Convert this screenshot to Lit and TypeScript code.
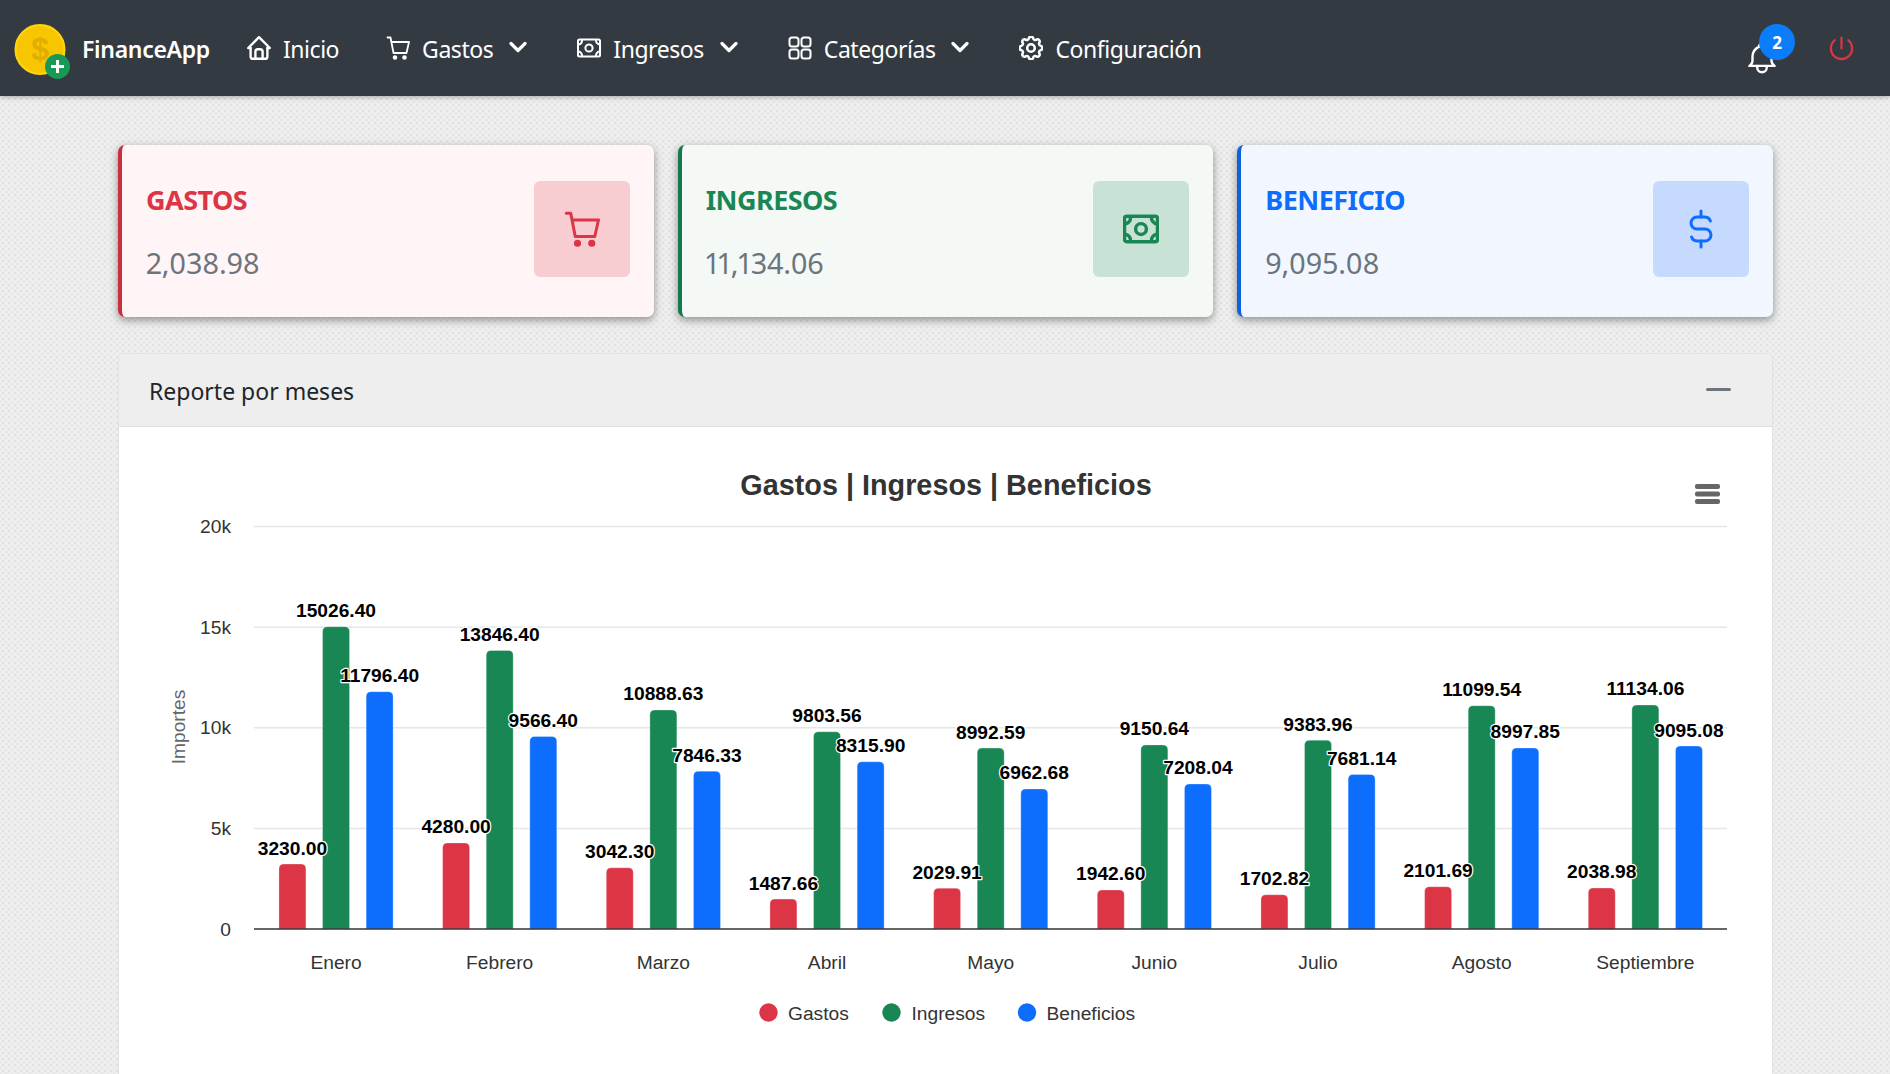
import { LitElement, css, html, svg } from "lit";
import { customElement } from "lit/decorators.js";

const RED = "#dc3545";
const GREEN = "#198754";
const BLUE = "#0d6efd";

const months = [
  { name: "Enero", g: 3230.0, i: 15026.4, b: 11796.4 },
  { name: "Febrero", g: 4280.0, i: 13846.4, b: 9566.4 },
  { name: "Marzo", g: 3042.3, i: 10888.63, b: 7846.33 },
  { name: "Abril", g: 1487.66, i: 9803.56, b: 8315.9 },
  { name: "Mayo", g: 2029.91, i: 8992.59, b: 6962.68 },
  { name: "Junio", g: 1942.6, i: 9150.64, b: 7208.04 },
  { name: "Julio", g: 1702.82, i: 9383.96, b: 7681.14 },
  { name: "Agosto", g: 2101.69, i: 11099.54, b: 8997.85 },
  { name: "Septiembre", g: 2038.98, i: 11134.06, b: 9095.08 },
];

const ic = (size: number, box: string, body: unknown, sw = 2) => html`<svg
  width=${size}
  height=${size}
  viewBox=${box}
  fill="none"
  stroke="currentColor"
  stroke-width=${sw}
  stroke-linecap="round"
  stroke-linejoin="round"
>
  ${body}
</svg>`;

const house = svg`<path d="M5 12H3l9-9 9 9h-2" /><path d="M5 12v7a2 2 0 0 0 2 2h10a2 2 0 0 0 2-2v-7" /><path d="M9 21v-6a2 2 0 0 1 2-2h2a2 2 0 0 1 2 2v6" />`;
const cart = svg`<path d="M1.5 1.5h3L7.5 17h13l2.5-11H5.5" /><circle cx="9" cy="21.5" r="1.4" fill="currentColor" /><circle cx="18.5" cy="21.5" r="1.4" fill="currentColor" />`;
const cash = svg`<rect x="1" y="3.5" width="22" height="17" rx="1.5" /><circle cx="12" cy="12" r="3.6" /><path d="M1.5 8.5a4 4 0 0 0 3.5-4M19 4a4 4 0 0 0 3.5 4.5M22.5 15.5A4 4 0 0 0 19 20M5 20a4 4 0 0 0-3.5-4.5" />`;
const grid = svg`<rect x="1.5" y="1.5" width="9" height="9" rx="2.5" /><rect x="13.5" y="1.5" width="9" height="9" rx="2.5" /><rect x="1.5" y="13.5" width="9" height="9" rx="2.5" /><rect x="13.5" y="13.5" width="9" height="9" rx="2.5" />`;
const gear = svg`<path d="M10.325 4.317c.426-1.756 2.924-1.756 3.35 0a1.724 1.724 0 0 0 2.573 1.066c1.543-.94 3.31.826 2.37 2.37a1.724 1.724 0 0 0 1.065 2.572c1.756.426 1.756 2.924 0 3.35a1.724 1.724 0 0 0-1.066 2.573c.94 1.543-.826 3.31-2.37 2.37a1.724 1.724 0 0 0-2.572 1.065c-.426 1.756-2.924 1.756-3.35 0a1.724 1.724 0 0 0-2.573-1.066c-1.543.94-3.31-.826-2.37-2.37a1.724 1.724 0 0 0-1.065-2.572c-1.756-.426-1.756-2.924 0-3.35a1.724 1.724 0 0 0 1.066-2.573c-.94-1.543.826-3.31 2.37-2.37 1 .608 2.296.07 2.572-1.065z" /><circle cx="12" cy="12" r="3" />`;
const bell = svg`<path d="M10 5a2 2 0 1 1 4 0 7 7 0 0 1 4 6v3a4 4 0 0 0 2 3H4a4 4 0 0 0 2-3v-3a7 7 0 0 1 4-6" /><path d="M9 17v1a3 3 0 0 0 6 0v-1" />`;
const power = svg`<path d="M7 6a7.75 7.75 0 1 0 10 0" /><path d="M12 4v8" />`;
const dollar = svg`<path d="M16.7 8a3 3 0 0 0-2.7-2h-4a3 3 0 0 0 0 6h4a3 3 0 0 1 0 6h-4a3 3 0 0 1-2.7-2" /><path d="M12 3v3m0 12v3" />`;
const chevron = html`<svg class="chev" width="18" height="12" viewBox="0 0 18 12" fill="none" stroke="currentColor" stroke-width="3.2" stroke-linecap="round" stroke-linejoin="round"><path d="M2 2.5l7 7 7-7" /></svg>`;

@customElement("app-root")
export class AppRoot extends LitElement {
  static styles = css`
    :host {
      display: block;
      height: 1074px;
      overflow: hidden;
      font-family: "Noto Sans", "Open Sans", sans-serif;
      background-color: #f0f0f0;
      background-image: radial-gradient(#e2e2e2 1px, transparent 2px),
        radial-gradient(#e6e6e6 1px, transparent 2px);
      background-size: 6px 6px;
      background-position: 0 0, 3px 3px;
    }
    * {
      box-sizing: border-box;
    }
    nav {
      height: 96px;
      background: #343a42;
      color: #fff;
      display: flex;
      align-items: center;
      padding: 0 32px 0 12px;
      box-shadow: 0 1px 5px rgba(0, 0, 0, 0.3);
    }
    .brand {
      display: flex;
      align-items: center;
      gap: 10px;
      font-size: 23px;
      font-weight: 600;
      letter-spacing: -0.3px;
      margin-right: 37px;
    }
    .brand svg {
      margin-top: 8px;
    }
    .brand span,
    .item span {
      margin-top: 2px;
    }
    .item {
      display: flex;
      align-items: center;
      gap: 12px;
      font-size: 23px;
      letter-spacing: -0.45px;
      margin-right: 50px;
      white-space: nowrap;
    }
    .item.home {
      margin-right: 47px;
    }
    .chev {
      margin-left: 4px;
      margin-top: -3px;
    }
    .right {
      margin-left: auto;
      display: flex;
      align-items: center;
      gap: 44px;
    }
    .bell {
      position: relative;
      display: flex;
      margin-top: 20px;
    }
    .count {
      position: absolute;
      left: 16px;
      top: -15px;
      width: 36px;
      height: 36px;
      border-radius: 50%;
      background: #0b7dfb;
      font-size: 17px;
      font-weight: 700;
      display: flex;
      align-items: center;
      justify-content: center;
    }
    .power {
      color: #dc3545;
      display: flex;
    }
    main {
      padding: 49px 117px 0 118px;
    }
    .cards {
      display: grid;
      grid-template-columns: repeat(3, 1fr);
      gap: 24px;
      margin-bottom: 36px;
    }
    .card {
      height: 172px;
      border-radius: 7px;
      border-left: 4px solid;
      padding: 0 24px;
      display: flex;
      align-items: center;
      justify-content: space-between;
      box-shadow: 0 3px 8px rgba(0, 0, 0, 0.4);
    }
    .card.red {
      background: #fff5f6;
      border-color: #c8303f;
      color: #dc3545;
    }
    .card.green {
      background: #f4f9f6;
      border-color: #157a4b;
      color: #198754;
    }
    .card.blue {
      background: #f2f7ff;
      border-color: #0d62e0;
      color: #0d6efd;
    }
    .copy {
      margin-top: 3px;
    }
    .card h3 {
      margin: 0 0 26px;
      font-size: 27px;
      font-weight: 700;
      line-height: 34px;
      letter-spacing: -0.55px;
    }
    .card p {
      margin: 0;
      font-size: 28.8px;
      line-height: 40px;
      color: #6c757d;
      letter-spacing: -0.2px;
      font-variant-numeric: proportional-nums;
    }
    .tile {
      width: 96px;
      height: 96px;
      margin-bottom: 4px;
      border-radius: 6px;
      display: flex;
      align-items: center;
      justify-content: center;
    }
    .red .tile {
      background: #f8cdd2;
    }
    .green .tile {
      background: #c9e2d6;
    }
    .blue .tile {
      background: #c6daff;
    }
    .panel {
      border: 1px solid #e2e2e2;
      border-bottom: 0;
      border-radius: 6px 6px 0 0;
      background: #fff;
      overflow: hidden;
    }
    .panel header {
      height: 73px;
      background: #eee;
      border-bottom: 1px solid #dedede;
      padding: 2px 41px 0 30px;
      display: flex;
      align-items: center;
      justify-content: space-between;
      font-size: 23px;
      color: #212529;
    }
    .minus {
      width: 25px;
      height: 3px;
      border-radius: 2px;
      background: #6c757d;
      margin-top: -4px;
    }
    .chart {
      display: block;
      width: 100%;
      height: 648px;
      font-family: "Liberation Sans", Arial, sans-serif;
    }
  `;

  private chart() {
    // page coordinates, the viewBox starts at the panel body corner
    const left = 254;
    const right = 1727;
    const base = 929;
    const step = (right - left) / 9;
    const y = (v: number) => base - (v * 100.6) / 5000;
    const bar = (cx: number, v: number, c: string) => {
      const t = y(v);
      return svg`<path d="M${cx - 13.5} ${base}V${t + 5}q0-5 5-5h17q5 0 5 5V${base}z" fill=${c} stroke="#fff" stroke-opacity=".3" stroke-width="1" />`;
    };
    const label = (cx: number, v: number) =>
      svg`<text x=${cx} y=${y(v) - 9.5} text-anchor="middle" font-size="19.2" font-weight="700" fill="#000" stroke="#fff" stroke-width="2.4" stroke-linejoin="round" paint-order="stroke">${v.toFixed(2)}</text>`;

    return html`<svg class="chart" viewBox="119 427 1653 648">
      <text x="946" y="495" text-anchor="middle" font-size="28.8" font-weight="700" fill="#333">Gastos | Ingresos | Beneficios</text>
      <g fill="#666"><rect x="1695" y="484" width="25" height="5" rx="2" /><rect x="1695" y="491.5" width="25" height="5" rx="2" /><rect x="1695" y="499" width="25" height="5" rx="2" /></g>
      ${[5000, 10000, 15000, 20000].map(
        (v) => svg`<line x1=${left} x2=${right} y1=${y(v)} y2=${y(v)} stroke="#e6e6e6" stroke-width="1.5" />`
      )}
      ${[0, 5, 10, 15, 20].map(
        (k) => svg`<text x="231" y=${y(k * 1000) + 6.5} text-anchor="end" font-size="19.2" fill="#333">${k ? `${k}k` : "0"}</text>`
      )}
      <text transform="translate(185 727) rotate(-90)" text-anchor="middle" font-size="19.2" fill="#666">Importes</text>
      ${months.map((m, n) => {
        const c = left + step * n + step / 2 + 0.2;
        return svg`${bar(c - 43.6, m.g, RED)}${bar(c, m.i, GREEN)}${bar(c + 43.6, m.b, BLUE)}
          <text x=${c} y="968.5" text-anchor="middle" font-size="19.2" fill="#333">${m.name}</text>`;
      })}
      <line x1=${left} x2=${right} y1=${base} y2=${base} stroke="#333" stroke-width="1.6" />
      ${months.map((m, n) => {
        const c = left + step * n + step / 2 + 0.2;
        return svg`${label(c - 43.6, m.g)}${label(c, m.i)}${label(c + 43.6, m.b)}`;
      })}
      ${[
        { x: 768.5, c: RED, t: "Gastos", tx: 788 },
        { x: 891.5, c: GREEN, t: "Ingresos", tx: 911.5 },
        { x: 1027, c: BLUE, t: "Beneficios", tx: 1046.5 },
      ].map(
        (l) => svg`<circle cx=${l.x} cy="1012.5" r="9.2" fill=${l.c} /><text x=${l.tx} y="1019.5" font-size="19.2" fill="#333">${l.t}</text>`
      )}
    </svg>`;
  }

  render() {
    return html`
      <nav>
        <div class="brand">
          <svg width="60" height="60" viewBox="0 0 60 60">
            <circle cx="28" cy="27.5" r="24.5" fill="#f7c600" stroke="#ffd60a" stroke-width="2" />
            <text x="28" y="38" text-anchor="middle" font-family="Liberation Sans, sans-serif" font-size="32" fill="#e3ad00">$</text>
            <circle cx="45.5" cy="44.5" r="12.5" fill="#169a55" />
            <path d="M45.5 38v13M39 44.5h13" stroke="#fff" stroke-width="3" />
          </svg>
          <span>FinanceApp</span>
        </div>
        <div class="item home">${ic(24, "2 2 20 20", house)}<span>Inicio</span></div>
        <div class="item">${ic(24, "0 0 24 24", cart, 1.8)}<span>Gastos</span>${chevron}</div>
        <div class="item">${ic(24, "0 0 24 24", cash)}<span>Ingresos</span>${chevron}</div>
        <div class="item">${ic(24, "0 0 24 24", grid)}<span>Categorías</span>${chevron}</div>
        <div class="item">${ic(24, "2.5 2.5 19 19", gear)}<span>Configuración</span></div>
        <div class="right">
          <div class="bell">
            ${ic(38, "0 0 24 24", bell, 1.5)}
            <span class="count">2</span>
          </div>
          <div class="power">${ic(33, "0 0 24 24", power, 1.6)}</div>
        </div>
      </nav>
      <main>
        <section class="cards">
          <div class="card red">
            <div class="copy"><h3>GASTOS</h3><p>2,038.98</p></div>
            <div class="tile">${ic(36, "0 0 24 24", cart, 2)}</div>
          </div>
          <div class="card green">
            <div class="copy"><h3>INGRESOS</h3><p>11,134.06</p></div>
            <div class="tile">${ic(36, "0 0 24 24", cash, 2.3)}</div>
          </div>
          <div class="card blue">
            <div class="copy"><h3>BENEFICIO</h3><p>9,095.08</p></div>
            <div class="tile">${ic(48, "0 0 24 24", dollar, 1.5)}</div>
          </div>
        </section>
        <section class="panel">
          <header><span>Reporte por meses</span><span class="minus"></span></header>
          ${this.chart()}
        </section>
      </main>
    `;
  }
}
